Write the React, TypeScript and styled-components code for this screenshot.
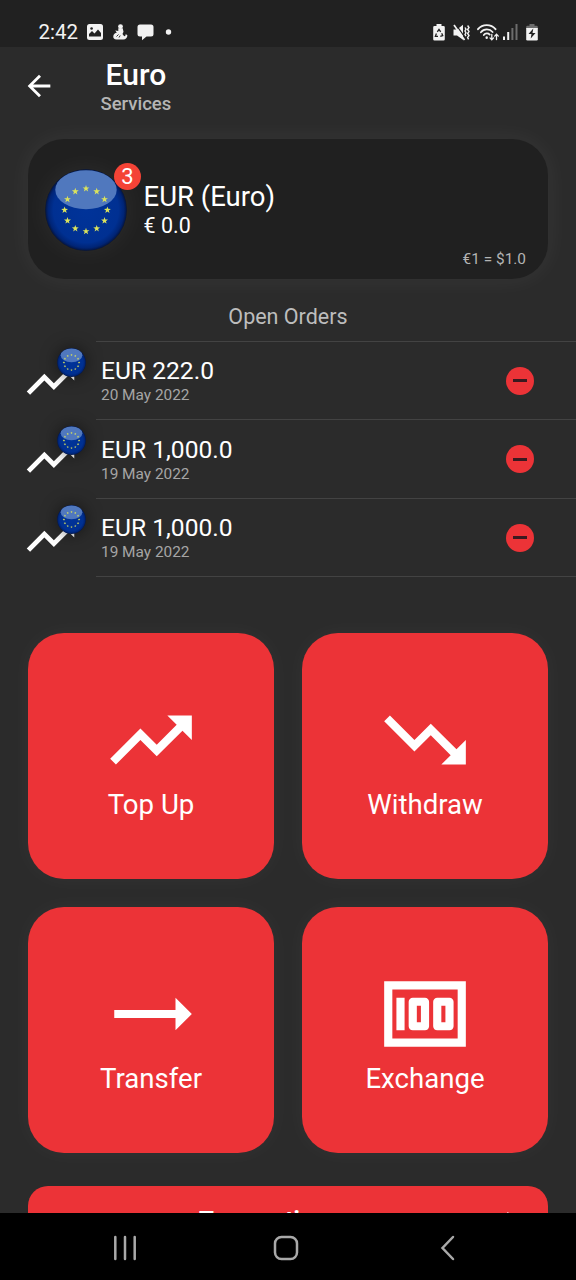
import React from "react";
import styled, { createGlobalStyle } from "styled-components";
import {
  MdArrowBack,
  MdMoney,
  MdTrendingDown,
  MdTrendingFlat,
  MdTrendingUp,
} from "react-icons/md";

const RED = "#ec3337";

const GlobalStyle = createGlobalStyle`
  * { box-sizing: border-box; }
  body {
    margin: 0;
    background: #2b2b2b;
    font-family: Roboto, sans-serif;
    color: #fff;
  }
  svg { display: block; flex: none; }
`;

const Screen = styled.div`
  width: 576px;
  height: 1280px;
  display: flex;
  flex-direction: column;
  overflow: hidden;
  background: #2b2b2b;
`;

const StatusBar = styled.div`
  flex: none;
  height: 47px;
  padding: 17px 38px 0 38.5px;
  display: flex;
  justify-content: space-between;
  background: #212121;
  color: #f2f2f2;
`;

const StatusGroup = styled.div<{ $gap: number }>`
  display: flex;
  align-items: center;
  height: 31px;
  padding-bottom: 1px;
  gap: ${(p) => p.$gap}px;
`;

const Clock = styled.span`
  font-size: 20.5px;
  line-height: 30px;
  width: 40px;
  white-space: nowrap;
`;

const Header = styled.header`
  flex: none;
  height: 92px;
  padding: 12px 0 0 22px;
  display: flex;
`;

const BackButton = styled.div`
  width: 34px;
  height: 54px;
  display: flex;
  align-items: center;
  justify-content: center;
`;

const Titles = styled.div`
  margin-left: 44.5px;
  display: flex;
  flex-direction: column;
  align-items: center;
`;

const Title = styled.h1`
  margin: 0;
  font-size: 30px;
  font-weight: 500;
  line-height: 32px;
`;

const Subtitle = styled.div`
  font-size: 18.5px;
  font-weight: 500;
  line-height: 26px;
  color: #b5b5b5;
`;

const BalanceCard = styled.section`
  flex: none;
  height: 140px;
  margin: 0 28px;
  padding: 0 22px 0 17px;
  display: flex;
  align-items: stretch;
  border-radius: 36px;
  background: #202020;
  box-shadow: 0 0 26px rgba(255, 255, 255, 0.06);
`;

const FlagSlot = styled.div`
  position: relative;
  width: 82px;
  height: 82px;
  margin-top: 29.5px;
  border-radius: 50%;
  box-shadow: 0 0 28px rgba(255, 255, 255, 0.06);
`;

const Badge = styled.span`
  position: absolute;
  top: -6px;
  right: -14px;
  width: 27px;
  height: 27px;
  border-radius: 50%;
  background: #f44336;
  font-size: 22px;
  line-height: 28px;
  text-align: center;
`;

const BalanceText = styled.div`
  flex: 1;
  padding: 42px 0 0 16.5px;
  display: flex;
  flex-direction: column;
`;

const CurrencyName = styled.div`
  font-size: 27.5px;
  line-height: 32px;
`;

const Amount = styled.div`
  font-size: 21.5px;
  line-height: 26px;
`;

const Rate = styled.div`
  margin-top: 8.5px;
  align-self: flex-end;
  font-size: 15.4px;
  line-height: 22px;
  color: #b4b4b4;
`;

const SectionTitle = styled.h2`
  flex: none;
  margin: 24px 0 0;
  height: 38px;
  font-size: 21.5px;
  font-weight: 400;
  line-height: 28px;
  text-align: center;
  color: #bdbdbd;
`;

const Orders = styled.div`
  flex: none;
  height: 236px;
  display: grid;
  grid-template-rows: 78px 79px 79px;
`;

const OrderRow = styled.div`
  display: flex;
  padding-left: 22px;
`;

const OrderIcon = styled.div`
  position: relative;
  width: 74px;
  padding-top: 11px;
`;

const MiniFlag = styled.div`
  position: absolute;
  left: 35px;
  top: 7px;
  width: 29px;
  height: 29px;
  border-radius: 50%;
  box-shadow: 0 0 16px rgba(0, 0, 0, 0.5);
`;

const OrderBody = styled.div<{ $last?: boolean }>`
  flex: 1;
  display: flex;
  align-items: center;
  justify-content: space-between;
  padding: 0 42px 0 5px;
  border-top: 1px solid #434343;
  border-bottom: ${(p) => (p.$last ? "1px solid #434343" : "none")};
`;

const OrderText = styled.div`
  padding-bottom: 1px;
`;

const OrderAmount = styled.div`
  font-size: 24.6px;
  line-height: 30px;
`;

const OrderDate = styled.div`
  font-size: 15.4px;
  line-height: 18px;
  color: #a5a5a5;
`;

const RemoveButton = styled.div`
  width: 28px;
  height: 28px;
  border-radius: 50%;
  background: ${RED};
  display: flex;
  align-items: center;
  justify-content: center;

  &::after {
    content: "";
    width: 14px;
    height: 3px;
    background: #3a1a20;
  }
`;

const Actions = styled.div`
  flex: none;
  margin: 55.5px 28px 0;
  display: grid;
  grid-template-columns: 246px 246px;
  grid-auto-rows: 246px;
  gap: 28px;
`;

const ActionCard = styled.div`
  display: flex;
  flex-direction: column;
  align-items: center;
  padding-top: 58px;
  border-radius: 36px;
  background: ${RED};
  box-shadow: 0 0 24px rgba(255, 255, 255, 0.04);
`;

const ActionLabel = styled.div`
  font-size: 27.6px;
  line-height: 32px;
`;

const WideButtonClip = styled.div`
  flex: 1;
  min-height: 0;
  overflow: hidden;
  padding: 33px 28px 0;
`;

const WideButton = styled.div`
  height: 70px;
  padding: 20px 30px 0 171px;
  display: flex;
  justify-content: space-between;
  border-radius: 20px;
  background: ${RED};
  font-size: 24px;
  font-weight: 700;
  line-height: 28px;
`;

const NavBar = styled.nav`
  flex: none;
  height: 67px;
  padding: 2px 121px 0 113px;
  display: grid;
  grid-template-columns: 160px 1fr 15px;
  align-items: center;
  background: #000;
`;

function EuroFlag({ size, id }: { size: number; id: string }) {
  const stars = Array.from({ length: 12 }, (_, i) => (i * Math.PI) / 6);
  const star = (cx: number, cy: number, r: number) =>
    Array.from({ length: 10 }, (_, k) => {
      const a = -Math.PI / 2 + (k * Math.PI) / 5;
      const d = k % 2 ? r * 0.4 : r;
      return `${(cx + d * Math.cos(a)).toFixed(2)},${(cy + d * Math.sin(a)).toFixed(2)}`;
    }).join(" ");
  return (
    <svg width={size} height={size} viewBox="0 0 82 82">
      <defs>
        <radialGradient id={id}>
          <stop offset="0" stopColor="#003399" />
          <stop offset="0.8" stopColor="#003092" />
          <stop offset="0.93" stopColor="#002475" />
          <stop offset="1" stopColor="#04143f" />
        </radialGradient>
      </defs>
      <circle cx="41" cy="41" r="40.8" fill={`url(#${id})`} />
      <ellipse cx="41" cy="20.7" rx="30.7" ry="19.5" fill="#5078be" />
      {stars.map((a) => (
        <polygon
          key={a}
          points={star(41 + 21.4 * Math.sin(a), 41 - 21.4 * Math.cos(a), 3.6)}
          fill="#dbe35c"
        />
      ))}
    </svg>
  );
}

const PictureIcon = () => (
  <svg width="16" height="16" viewBox="0 0 16 16">
    <rect width="16" height="16" rx="2.5" fill="#f2f2f2" />
    <path d="M2 12.5V10l3-3 2.5 2.5L11 5.5l3 3.5v3.5z" fill="#212121" />
    <circle cx="4.6" cy="4.5" r="1.3" fill="#212121" />
  </svg>
);

const FigureIcon = () => (
  <svg width="16" height="16" viewBox="0 0 16 16" fill="#f2f2f2">
    <circle cx="8.5" cy="2.6" r="2.4" />
    <path d="M6.3 4.2h4.400l.8 3.600-1 2.200 1.700 2.300c1.100-.4 1.700-1.200 1.400-2.300l1.800 1.200c-.1 2.600-1.600 4.300-4 4.300H4.500c-2.300 0-3.500-1.500-3.200-3.500.3-1.900 1.700-2.900 3.500-3.200L3.300 6.500l3 .5z" />
    <path d="M4.500 12.500l2-2M7 13.500l1.200-2" stroke="#212121" strokeWidth="0.9" />
  </svg>
);

const ChatIcon = () => (
  <svg width="17" height="17" viewBox="0 0 17 17">
    <path
      d="M3 .5h11a2.500 2.500 0 0 1 2.500 2.500v7a2.500 2.500 0 0 1-2.500 2.500H9.500L5 16.300v-3.800H3A2.500 2.500 0 0 1 .5 10V3A2.500 2.500 0 0 1 3 .5z"
      fill="#f2f2f2"
    />
  </svg>
);

const DotIcon = () => (
  <svg width="14" height="6" viewBox="0 0 14 6">
    <circle cx="6.5" cy="3" r="2.7" fill="#f2f2f2" />
  </svg>
);

const RecycleBatteryIcon = () => (
  <svg width="17" height="17" viewBox="0 0 17 17">
    <path
      d="M3.500 0h5v2H10.500a1.300 1.300 0 0 1 1.300 1.300v12a1.300 1.300 0 0 1-1.300 1.300h-9A1.300 1.300 0 0 1 .2 15.300v-12A1.300 1.300 0 0 1 1.500 2h2z"
      fill="#f2f2f2"
    />
    <path
      d="M4.300 7.800L6 5.300l1.700 2.500M8.700 9.300l1 2.200-2.400.8M5 12.300H2.400l1-2.700"
      fill="none"
      stroke="#212121"
      strokeWidth="1.3"
    />
  </svg>
);

const MuteIcon = () => (
  <svg width="20" height="17" viewBox="0 0 20 17">
    <path d="M.5 5.500h3.500L10 .8v15L4 11.500H.5z" fill="#f2f2f2" />
    <path d="M2.500 0l9.500 13.500" stroke="#212121" strokeWidth="1.3" />
    <path d="M1 1l10.500 15" stroke="#f2f2f2" strokeWidth="1.7" />
    <path
      d="M12 3.500l1 1.700L12 7l1 1.800-1 1.700 1 1.700M14.600 1.500l1.400 2-1.400 2 1.400 2-1.400 2 1.400 2-1.400 2 1 1.800"
      fill="none"
      stroke="#f2f2f2"
      strokeWidth="1.4"
    />
  </svg>
);

const WifiIcon = () => (
  <svg width="23" height="17" viewBox="0 0 23 17" fill="none" stroke="#f2f2f2" strokeLinecap="round">
    <path d="M1 5.200C5.500-.2 14-.2 18.500 5.200" strokeWidth="1.9" />
    <path d="M3.900 8.200c3-3.700 8.700-3.700 11.700-.2" strokeWidth="1.8" />
    <path d="M6.800 11c1.500-2 4.300-2.100 5.900-.4" strokeWidth="1.8" />
    <path d="M9.700 13.500v.2" strokeWidth="2.4" />
    <path d="M14.800 10.500v5M13 13.900l1.800 2 1.800-2M19.500 15.500v-5M17.700 12.100l1.800-2 1.800 2" strokeWidth="1.3" />
  </svg>
);

const SignalIcon = () => (
  <svg width="19.5" height="16" viewBox="0 0 19.5 16">
    <rect x="0" y="12.500" width="2" height="3.500" fill="#f2f2f2" />
    <rect x="4.200" y="8" width="2" height="8" fill="#f2f2f2" />
    <rect x="8.400" y="4" width="2" height="12" fill="#6d6d6d" />
    <rect x="12.500" y="0" width="2" height="16" fill="#6d6d6d" />
  </svg>
);

const ChargingIcon = () => (
  <svg width="12" height="17" viewBox="0 0 12 17">
    <path
      d="M3.500 0h5v1.800h2A1.300 1.300 0 0 1 11.800 3v2H.2V3a1.300 1.300 0 0 1 1.300-1.200h2z"
      fill="#6d6d6d"
    />
    <path
      d="M.2 4h11.600v11.300a1.300 1.300 0 0 1-1.300 1.300h-9a1.300 1.300 0 0 1-1.300-1.300z"
      fill="#f2f2f2"
    />
    <path d="M7.300 4.500L2.500 10h3l-.8 4.500L9.500 9H6.500z" fill="#212121" />
  </svg>
);

const orders = [
  { amount: "EUR 222.0", date: "20 May 2022" },
  { amount: "EUR 1,000.0", date: "19 May 2022" },
  { amount: "EUR 1,000.0", date: "19 May 2022" },
];

const actions = [
  { label: "Top Up", Icon: MdTrendingUp },
  { label: "Withdraw", Icon: MdTrendingDown },
  { label: "Transfer", Icon: MdTrendingFlat },
  { label: "Exchange", Icon: MdMoney },
];

export default function App() {
  return (
    <>
      <GlobalStyle />
      <Screen>
        <StatusBar>
          <StatusGroup $gap={8.7}>
            <Clock>2:42</Clock>
            <PictureIcon />
            <FigureIcon />
            <ChatIcon />
            <DotIcon />
          </StatusGroup>
          <StatusGroup $gap={3.5}>
            <RecycleBatteryIcon />
            <MuteIcon />
            <WifiIcon />
            <SignalIcon />
            <ChargingIcon />
          </StatusGroup>
        </StatusBar>

        <Header>
          <BackButton>
            <MdArrowBack size={34} />
          </BackButton>
          <Titles>
            <Title>Euro</Title>
            <Subtitle>Services</Subtitle>
          </Titles>
        </Header>

        <BalanceCard>
          <FlagSlot>
            <EuroFlag size={82} id="flag" />
            <Badge>3</Badge>
          </FlagSlot>
          <BalanceText>
            <CurrencyName>EUR (Euro)</CurrencyName>
            <Amount>€ 0.0</Amount>
            <Rate>€1 = $1.0</Rate>
          </BalanceText>
        </BalanceCard>

        <SectionTitle>Open Orders</SectionTitle>
        <Orders>
          {orders.map((o, i) => (
            <OrderRow key={i}>
              <OrderIcon>
                <MdTrendingUp size={57} />
                <MiniFlag>
                  <EuroFlag size={29} id={`flag-${i}`} />
                </MiniFlag>
              </OrderIcon>
              <OrderBody $last={i === orders.length - 1}>
                <OrderText>
                  <OrderAmount>{o.amount}</OrderAmount>
                  <OrderDate>{o.date}</OrderDate>
                </OrderText>
                <RemoveButton />
              </OrderBody>
            </OrderRow>
          ))}
        </Orders>

        <Actions>
          {actions.map(({ label, Icon }) => (
            <ActionCard key={label}>
              <Icon size={98} />
              <ActionLabel>{label}</ActionLabel>
            </ActionCard>
          ))}
        </Actions>

        <WideButtonClip>
          <WideButton>
            <span>Transactions</span>
            <svg width="22" height="28" viewBox="0 0 22 28">
              <path d="M11 7l8 8-8 8M2 15h16" fill="none" stroke="#fff" strokeWidth="2.5" />
            </svg>
          </WideButton>
        </WideButtonClip>

        <NavBar>
          <svg width="24" height="26" viewBox="0 0 24 26">
            <path d="M2.300 2v22M12 2v22M21.700 2v22" stroke="#a9a9a9" strokeWidth="2.5" strokeLinecap="round" />
          </svg>
          <svg width="26" height="26" viewBox="0 0 26 26">
            <rect x="2" y="2" width="22" height="22" rx="6.5" fill="none" stroke="#a9a9a9" strokeWidth="2.5" />
          </svg>
          <svg width="15" height="26" viewBox="0 0 15 26">
            <path d="M13 2L2.500 13 13 24" fill="none" stroke="#a9a9a9" strokeWidth="2.5" strokeLinecap="round" />
          </svg>
        </NavBar>
      </Screen>
    </>
  );
}
